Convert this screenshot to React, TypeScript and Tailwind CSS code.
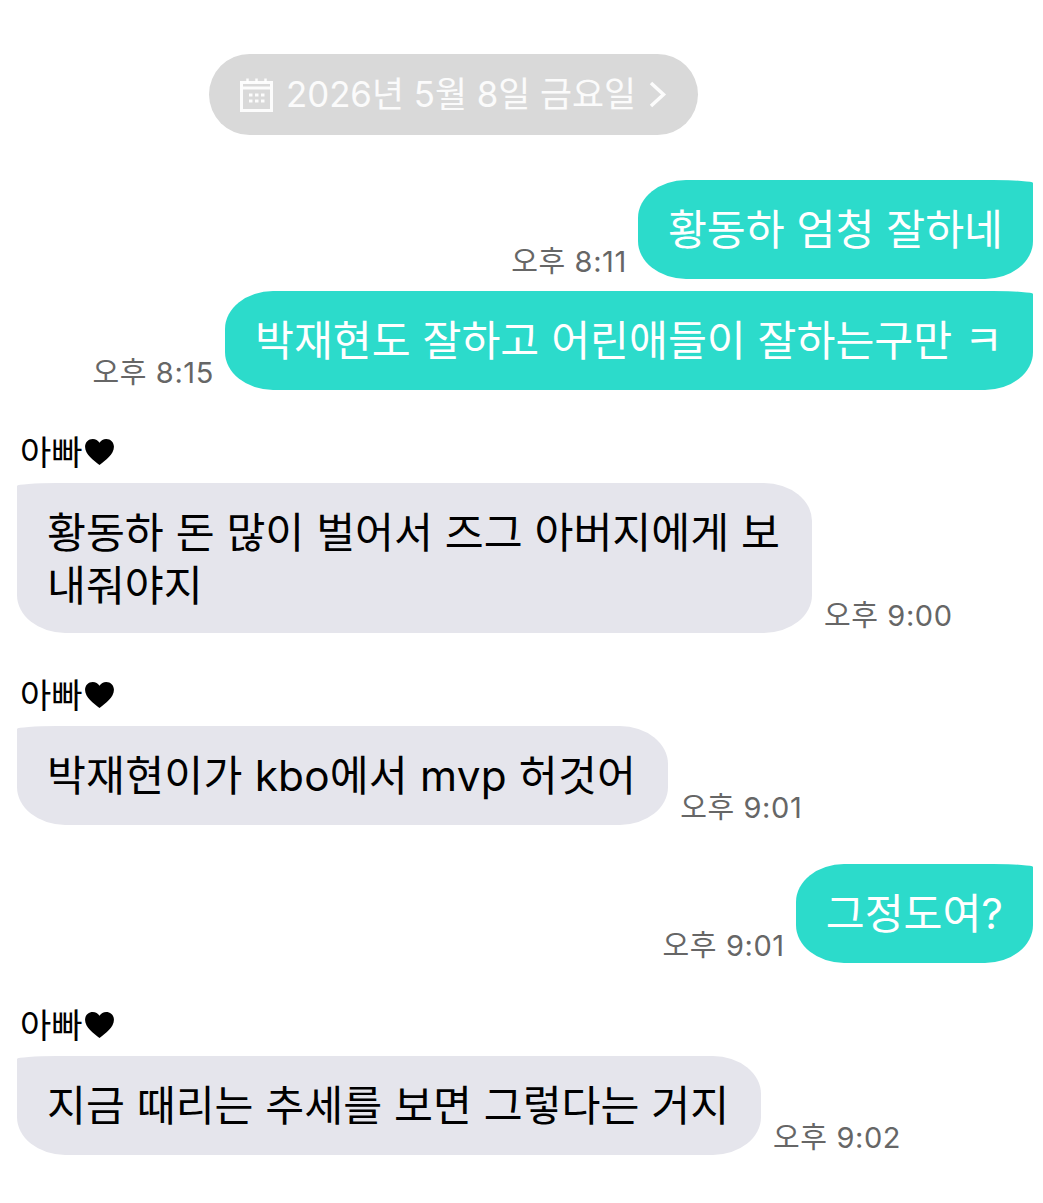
const FONT = 'font-["Inter","Noto_Sans_CJK_KR",sans-serif]'

function CalendarIcon() {
  return (
    <svg width="33" height="34" viewBox="0 0 33 34" fill="none" className="shrink-0">
      <path d="M1.500 4.500h30v28h-30zM1.500 10h30" stroke="#fff" strokeOpacity="0.92" strokeWidth="3" />
      <path d="M7.500 0.500v4M16.500 0.500v4M25.500 0.500v4" stroke="#fff" strokeOpacity="0.92" strokeWidth="2.500" />
      <path d="M9 17h3.500M15 17h3.500M21 17h3.500M9 23h3.500M15 23h3.500M21 23h3.500" stroke="#fff" strokeOpacity="0.92" strokeWidth="3" />
    </svg>
  )
}

function Heart() {
  return (
    <svg width="29" height="26" viewBox="0 0 30 27" className="shrink-0 ml-[2px]">
      <path d="M15 27C9 22 0 16 0 8 0 3.500 3.500 0 8 0c3 0 5.500 1.500 7 4 1.500-2.500 4-4 7-4 4.500 0 8 3.500 8 8 0 8-9 14-15 19z" fill="#000" />
    </svg>
  )
}

function Time({ children }: { children: string }) {
  return <span className="text-[29px] leading-[34px] text-[#666666] whitespace-nowrap tracking-[0.6px]">{children}</span>
}

function Outgoing({ text, time, className }: { text: string; time: string; className?: string }) {
  return (
    <div className={`flex justify-end items-end gap-[11px] pr-[10px] ${className ?? ''}`}>
      <Time>{time}</Time>
      <div className="bg-[#2cdbcb] text-white text-[42.300px] leading-[53px] px-[30px] py-[23px] rounded-[48px/38px] rounded-tr-[40px_3px] whitespace-nowrap">
        {text}
      </div>
    </div>
  )
}

function Incoming({
  text,
  time,
  className,
  box = 'pr-[32px] py-[23px]',
}: {
  text: string
  time: string
  className?: string
  box?: string
}) {
  return (
    <div className={`pl-[20px] ${className ?? ''}`}>
      <div className="flex items-center h-[36px] text-[34px] text-black">
        아빠
        <Heart />
      </div>
      <div className="flex items-end gap-[12px] mt-[13px] -ml-[3px]">
        <div className={`bg-[#e5e5ec] text-black text-[42.300px] leading-[53px] pl-[30px] rounded-[48px/38px] rounded-tl-[40px_3px] ${box}`}>
          {text}
        </div>
        <Time>{time}</Time>
      </div>
    </div>
  )
}

export default function App() {
  return (
    <div className={`w-[1043px] h-[1203px] bg-white overflow-hidden pt-[54px] ${FONT}`}>
      <div className="flex justify-start pl-[209px]">
        <div className="w-[489px] h-[81px] rounded-full bg-[#d9d9d9] flex items-center justify-center gap-[13px] text-[34.800px] text-white/90">
          <CalendarIcon />
          <span>2026년 5월 8일 금요일</span>
          <svg width="18" height="27" viewBox="0 0 18 27" fill="none" className="shrink-0">
            <path d="M2 2l12.500 11.500L2 25" stroke="#fff" strokeOpacity="0.92" strokeWidth="3.500" />
          </svg>
        </div>
      </div>

      <Outgoing className="mt-[45px]" text="황동하 엄청 잘하네" time="오후 8:11" />
      <Outgoing className="mt-[12px]" text="박재현도 잘하고 어린애들이 잘하는구만 ㅋ" time="오후 8:15" />

      <Incoming
        className="mt-[44px]"
        text="황동하 돈 많이 벌어서 즈그 아버지에게 보내줘야지"
        time="오후 9:00"
        box="w-[795px] pr-[30px] pt-[23px] pb-[21px]"
      />
      <Incoming
        className="mt-[44px]"
        text="박재현이가 kbo에서 mvp 허것어"
        time="오후 9:01"
        box="tracking-[0.2px] pr-[32px] py-[23px]"
      />

      <Outgoing className="mt-[39px]" text="그정도여?" time="오후 9:01" />

      <Incoming className="mt-[44px]" text="지금 때리는 추세를 보면 그렇다는 거지" time="오후 9:02" />
    </div>
  )
}
